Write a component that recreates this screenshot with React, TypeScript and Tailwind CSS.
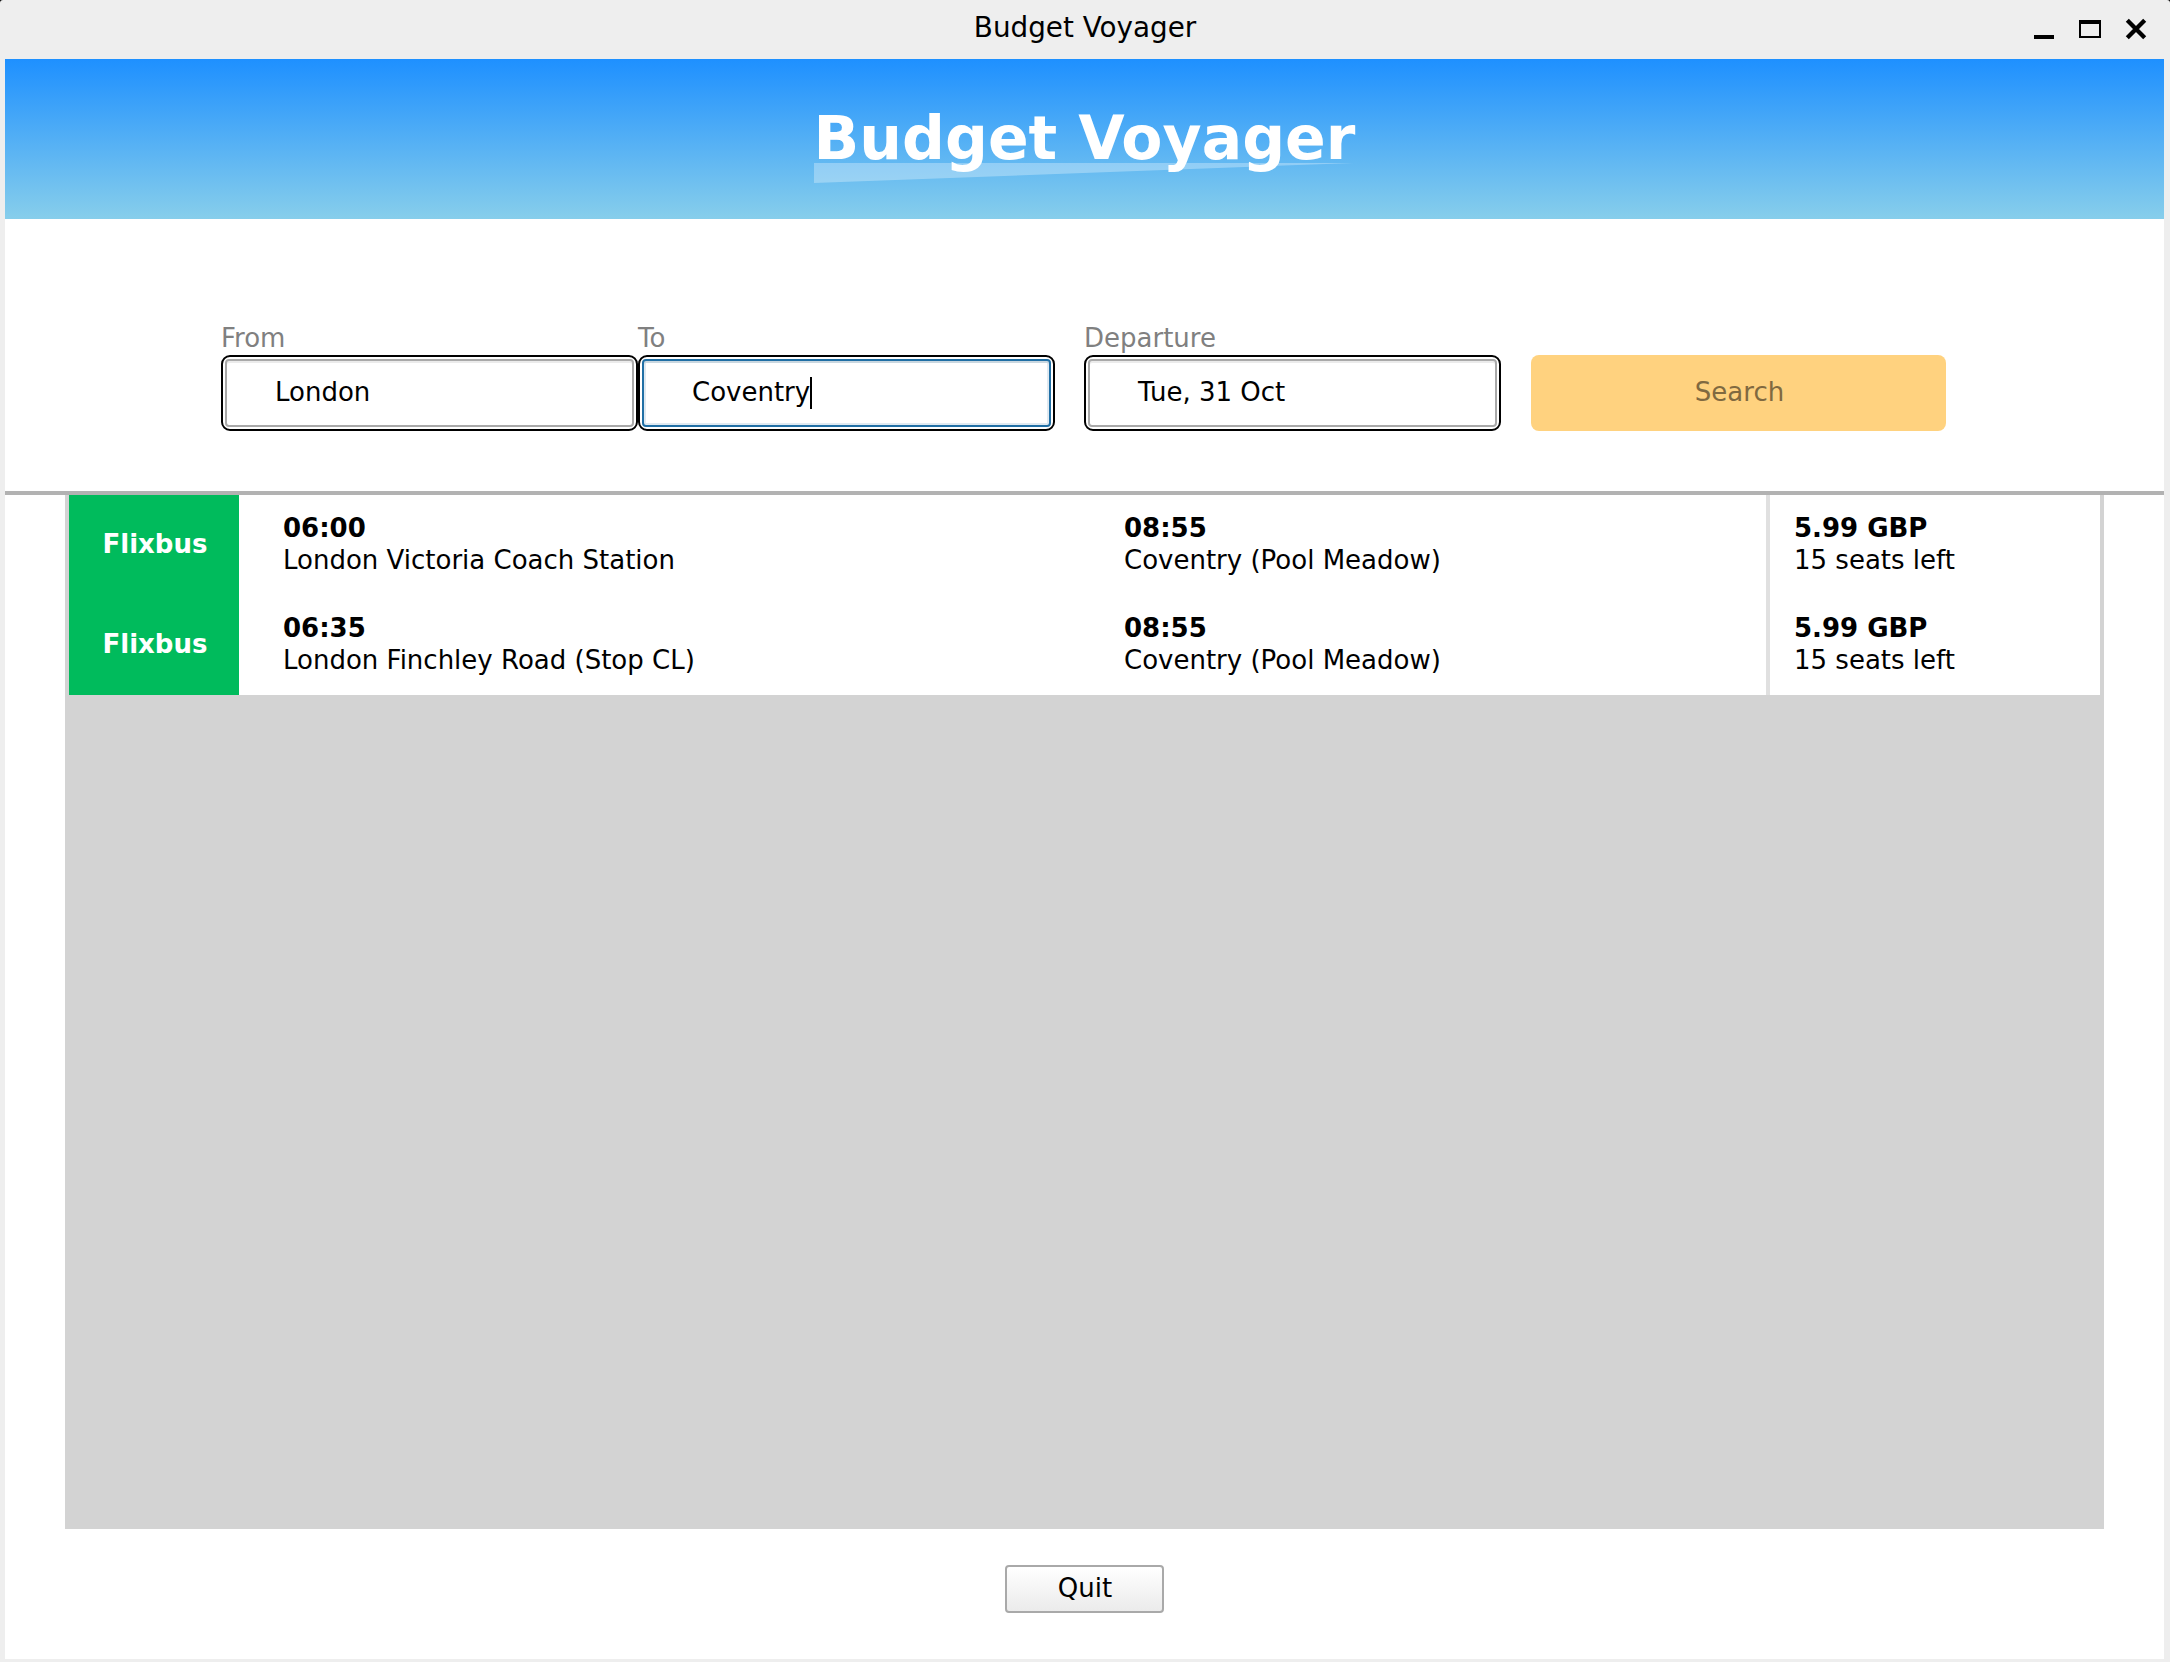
import type { ReactNode } from "react";

const trips = [
  { from: "London Victoria Coach Station", departs: "06:00", to: "Coventry (Pool Meadow)", arrives: "08:55", price: "5.99 GBP", seats: "15 seats left" },
  { from: "London Finchley Road (Stop CL)", departs: "06:35", to: "Coventry (Pool Meadow)", arrives: "08:55", price: "5.99 GBP", seats: "15 seats left" },
];

function TitleBar() {
  return (
    <div className="relative flex h-[59px] shrink-0 items-start justify-center pt-3 text-[27.8px] leading-8">
      <span>Budget Voyager</span>
      <div className="absolute top-[18px] right-[22px] flex h-[22px] items-start">
        <svg className="mr-[25px]" width="20" height="22"><rect y="17" width="20" height="4" /></svg>
        <svg className="mt-[2px] mr-[24px]" width="22" height="18">
          <path d="M1 1h20v16H1z" fill="none" stroke="black" strokeWidth="2" />
          <rect x="1" width="21" height="4" />
        </svg>
        <svg width="22" height="22" className="mr-px">
          <path d="M2.3 2.3L19.7 19.7M19.7 2.3L2.3 19.7" stroke="black" strokeWidth="4.3" />
        </svg>
      </div>
    </div>
  );
}

function Header() {
  return (
    <header className="relative flex h-40 shrink-0 justify-center bg-[linear-gradient(#1e90ff,#87ceeb)]">
      <svg className="absolute top-[104px] left-[809px]" width="540" height="20">
        <path d="M0 0H540L0 20Z" fill="white" fillOpacity="0.3" />
      </svg>
      <h1 className="relative mt-11 text-[60px] leading-[70px] font-bold whitespace-nowrap text-white">Budget Voyager</h1>
    </header>
  );
}

function Field({ label, width, focused, children }: { label: string; width: string; focused?: boolean; children: ReactNode }) {
  return (
    <div className={width}>
      <div className="h-[33px] leading-8 text-[#808080]">{label}</div>
      <div className="h-[76px] rounded-[9px] border-2 border-black p-[2px]">
        <div
          className={
            "flex h-full items-center rounded-[4px] border-2 pb-[2px] pl-12 " +
            (focused
              ? "border-[#206fa5] shadow-[inset_0_2px_0_#c9d7e0,inset_2px_0_0_#dfe9f1,inset_-2px_0_0_#dfe9f1,inset_0_-2px_0_#dfe9f1]"
              : "border-[#a9a9a9] shadow-[inset_0_2px_0_#ebebeb]")
          }
        >
          {children}
          {focused && <span className="mt-[2px] h-8 w-[2px] bg-black" />}
        </div>
      </div>
    </div>
  );
}

export default function App() {
  return (
    <div className="h-[1662px] w-[2170px] bg-black">
      <div className="flex h-full flex-col rounded-t-[3px] bg-[#eeeeee] font-['DejaVu_Sans',sans-serif] text-[26px] leading-8 text-black">
        <TitleBar />
        <main className="mr-[6px] mb-[3px] ml-[5px] flex flex-1 flex-col bg-white">
          <Header />
          <section className="flex h-[276px] shrink-0 items-start border-b-4 border-[#b2b2b2] pt-[103px] pl-[216px]">
            <Field label="From" width="w-[417px]">London</Field>
            <Field label="To" width="w-[417px]" focused>Coventry</Field>
            <div className="w-[29px]" />
            <Field label="Departure" width="w-[417px]">Tue, 31 Oct</Field>
            <button className="mt-[33px] ml-[30px] h-[76px] w-[415px] rounded-[8px] bg-[#ffd27f] pb-[2px] pl-[2px] text-[#806940]">Search</button>
          </section>
          <section className="mx-[60px] h-[1034px] shrink-0 border-x-4 border-[#d3d3d3] bg-[#d3d3d3]">
            {trips.map((t) => (
              <div key={t.departs} className="flex h-[100px] bg-white">
                <div className="flex w-[170px] items-center justify-center bg-[#00bb5c] pb-[2px] pl-[2px] font-bold text-white">Flixbus</div>
                <div className="w-[841px] pt-[17px] pl-11"><b className="block">{t.departs}</b>{t.from}</div>
                <div className="flex-1 pt-[17px] pl-11"><b className="block">{t.arrives}</b>{t.to}</div>
                <div className="w-[334px] border-l-4 border-[#e0e0e0] pt-[17px] pl-6"><b className="block">{t.price}</b>{t.seats}</div>
              </div>
            ))}
          </section>
          <button className="mx-auto mt-9 h-12 w-[159px] rounded-[4px] border-2 border-[#a9a9a9] bg-linear-to-b from-white to-[#ebebeb] pb-[2px] pl-px">Quit</button>
        </main>
      </div>
    </div>
  );
}
